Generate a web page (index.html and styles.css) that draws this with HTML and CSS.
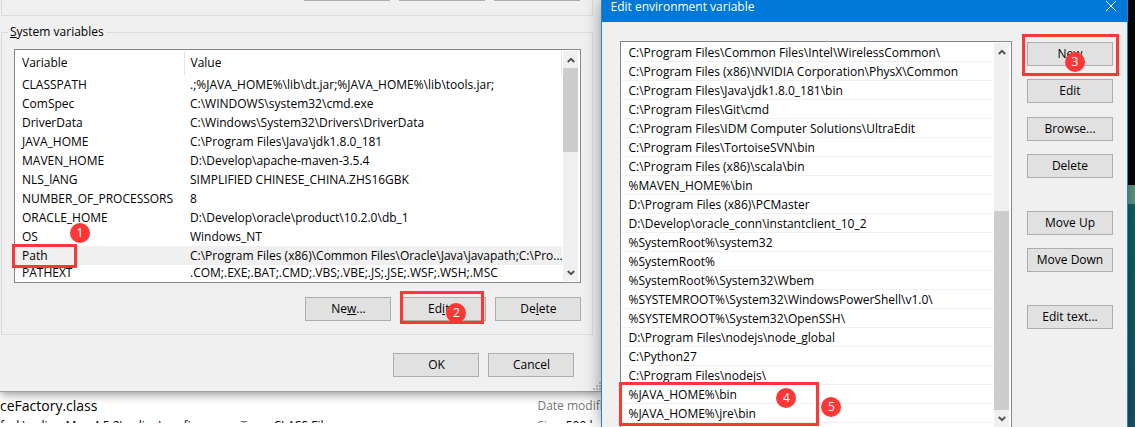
FILE: index.html
```html
<!DOCTYPE html>
<html lang="en">
<head>
<meta charset="utf-8">
<title>Environment Variables</title>
<link rel="stylesheet" href="styles.css">
</head>
<body>
<div class="desktop">
  <div class="background">
    <section class="dialog variables">
      <div class="user-group"><span></span><span></span><span></span></div>
      <fieldset class="system-group">
        <legend><u>S</u>ystem variables</legend>
        <div class="listbox variable-box">
          <table class="variable-table">
            <thead><tr><th class="name">Variable</th><th>Value</th></tr></thead>
            <tbody>
              <tr><td>CLASSPATH</td><td>.;%JAVA_HOME%\lib\dt.jar;%JAVA_HOME%\lib\tools.jar;</td></tr>
              <tr><td>ComSpec</td><td>C:\WINDOWS\system32\cmd.exe</td></tr>
              <tr><td>DriverData</td><td>C:\Windows\System32\Drivers\DriverData</td></tr>
              <tr><td>JAVA_HOME</td><td>C:\Program Files\Java\jdk1.8.0_181</td></tr>
              <tr><td>MAVEN_HOME</td><td>D:\Develop\apache-maven-3.5.4</td></tr>
              <tr><td>NLS_lANG</td><td>SIMPLIFIED CHINESE_CHINA.ZHS16GBK</td></tr>
              <tr><td>NUMBER_OF_PROCESSORS</td><td>8</td></tr>
              <tr><td>ORACLE_HOME</td><td>D:\Develop\oracle\product\10.2.0\db_1</td></tr>
              <tr><td>OS</td><td>Windows_NT</td></tr>
              <tr class="selected"><td class="anchor">Path<i class="frame frame-path"></i><b class="badge badge-1">1</b></td><td>C:\Program Files (x86)\Common Files\Oracle\Java\javapath;C:\Pro...</td></tr>
              <tr class="last"><td>PATHEXT</td><td>.COM;.EXE;.BAT;.CMD;.VBS;.VBE;.JS;.JSE;.WSF;.WSH;.MSC</td></tr>
            </tbody>
          </table>
          <div class="scrollbar">
            <button class="arrow" aria-label="Scroll up"><svg viewBox="0 0 8 6"><path d="M.8 5 4 1.800 7.200 5"/></svg></button>
            <div class="track"><div class="thumb thumb-top"></div></div>
            <button class="arrow" aria-label="Scroll down"><svg viewBox="0 0 8 6"><path d="M.8 1 4 4.200 7.200 1"/></svg></button>
          </div>
        </div>
        <div class="actions">
          <button class="btn">Ne<u>w</u>...</button>
          <div class="anchor"><button class="btn">Ed<u>i</u>t...</button><i class="frame frame-edit"></i><b class="badge badge-2">2</b></div>
          <button class="btn">De<u>l</u>ete</button>
        </div>
      </fieldset>
      <div class="actions confirm">
        <button class="btn">OK</button>
        <button class="btn">Cancel</button>
      </div>
      <svg class="grip" viewBox="0 0 8 8"><path d="M0 6h2v2H0zM3 6h2v2H3zM6 6h2v2H6zM3 3h2v2H3zM6 3h2v2H6zM6 0h2v2H6z"/></svg>
    </section>
    <section class="explorer">
      <div class="file-row"><span class="file-name">ceFactory.class</span><span class="meta">Date modified:</span></div>
      <div class="file-row detail"><span class="path">fork\online-Mav-4.5.2\online\configurm</span><span class="type"><em>Type:</em> CLASS File</span><span class="meta">Size: <strong>500 bytes</strong></span></div>
    </section>
  </div>
  <section class="dialog editor">
    <header class="titlebar">
      <h1>Edit environment variable</h1>
      <button class="close" aria-label="Close"><svg viewBox="0 0 12 12"><path d="M1 1l10 10M11 1 1 11"/></svg></button>
    </header>
    <div class="editor-body">
      <div class="listbox path-box">
        <ul class="paths">
          <li>C:\Program Files\Common Files\Intel\WirelessCommon\</li>
          <li>C:\Program Files (x86)\NVIDIA Corporation\PhysX\Common</li>
          <li>C:\Program Files\Java\jdk1.8.0_181\bin</li>
          <li>C:\Program Files\Git\cmd</li>
          <li>C:\Program Files\IDM Computer Solutions\UltraEdit</li>
          <li>C:\Program Files\TortoiseSVN\bin</li>
          <li>C:\Program Files (x86)\scala\bin</li>
          <li>%MAVEN_HOME%\bin</li>
          <li>D:\Program Files (x86)\PCMaster</li>
          <li>D:\Develop\oracle_conn\instantclient_10_2</li>
          <li>%SystemRoot%\system32</li>
          <li>%SystemRoot%</li>
          <li>%SystemRoot%\System32\Wbem</li>
          <li>%SYSTEMROOT%\System32\WindowsPowerShell\v1.0\</li>
          <li>%SYSTEMROOT%\System32\OpenSSH\</li>
          <li>D:\Program Files\nodejs\node_global</li>
          <li>C:\Python27</li>
          <li>C:\Program Files\nodejs\</li>
          <li class="anchor">%JAVA_HOME%\bin<i class="frame frame-java"></i><b class="badge badge-4">4</b><b class="badge badge-5">5</b></li>
          <li>%JAVA_HOME%\jre\bin</li>
        </ul>
        <div class="scrollbar">
          <button class="arrow" aria-label="Scroll up"><svg viewBox="0 0 8 6"><path d="M.8 5 4 1.800 7.200 5"/></svg></button>
          <div class="track"><div class="thumb thumb-bottom"></div></div>
          <button class="arrow" aria-label="Scroll down"><svg viewBox="0 0 8 6"><path d="M.8 1 4 4.200 7.200 1"/></svg></button>
        </div>
      </div>
      <div class="side">
        <div class="pair">
          <div class="anchor"><button class="btn">New</button><i class="frame frame-new"></i><b class="badge badge-3">3</b></div>
          <button class="btn">Edit</button>
        </div>
        <div class="pair">
          <button class="btn">Browse...</button>
          <button class="btn">Delete</button>
        </div>
        <div class="pair spaced">
          <button class="btn">Move Up</button>
          <button class="btn">Move Down</button>
        </div>
        <div class="pair spaced">
          <button class="btn">Edit text...</button>
        </div>
      </div>
    </div>
  </section>
  <div class="wallpaper"><div class="console"></div><div class="edge"></div></div>
</div>
</body>
</html>
```
FILE: styles.css
```css
* { box-sizing: border-box; }
body {
  margin: 0;
  font: 12px/16px "Open Sans", "Noto Sans", sans-serif;
  color: #000;
}
button { font: inherit; color: inherit; padding: 0; }
.desktop {
  display: flex;
  height: 100vh;
  overflow: hidden;
  background: #fff;
}
.background {
  flex: 602 1 0;
  min-width: 0;
  display: flex;
  flex-direction: column;
}
.dialog { background: #f0f0f0; }
.anchor { position: relative; }

/* Environment variables dialog */
.variables {
  position: relative;
  padding-bottom: 14px;
  border-bottom: 1px solid #9e9e9e;
  box-shadow: 0 2px 10px rgba(0, 0, 0, .45);
}
.user-group {
  display: flex;
  justify-content: flex-end;
  gap: 9px;
  height: 16px;
  margin: 0 8px 0 1px;
  padding-right: 12px;
  border: 1px solid #dcdcdc;
  border-top: 0;
}
.user-group span { width: 86px; height: 1px; background: #adadad; }
.system-group {
  min-width: 0;
  margin: 8px 8px 0 1px;
  padding: 9px 11px 13px 12px;
  border: 1px solid #dcdcdc;
}
.system-group legend { margin-left: -6px; padding: 0 2px; }
.listbox {
  display: flex;
  background: #fff;
  border: 1px solid #828790;
  padding: 1px;
}
.variable-table {
  flex: 1;
  width: 100%;
  min-width: 0;
  table-layout: fixed;
  border-collapse: collapse;
}
.variable-table th, .variable-table td {
  height: 19px;
  padding: 0 6px;
  text-align: left;
  font-weight: 400;
  white-space: nowrap;
}
.variable-table th { height: 24px; border-right: 1px solid #e5e5e5; }
.variable-table .name { width: 168px; }
.variable-table .selected { background: #f0f0f0; }
.variable-table .last td { height: 16px; }
.actions {
  display: flex;
  justify-content: flex-end;
  gap: 9px;
  margin-top: 14px;
}
.confirm { margin: 18px 27px 0 0; }
.btn {
  display: block;
  width: 86px;
  height: 24px;
  background: #e1e1e1;
  border: 1px solid #adadad;
}
.grip {
  position: absolute;
  right: 0;
  bottom: 1px;
  width: 8px;
  height: 8px;
  fill: #bfbfbf;
}

/* Scroll bars */
.scrollbar {
  flex: none;
  display: flex;
  flex-direction: column;
  width: 16px;
  margin-left: 1px;
  border-right: 1px solid #fff;
  background: #f0f0f0;
}
.arrow {
  display: grid;
  place-items: center;
  height: 17px;
  border: 0;
  background: none;
}
.arrow svg { width: 8px; height: 6px; fill: none; stroke: #555; stroke-width: 2; }
.track { flex: 1; display: flex; flex-direction: column; }
.thumb { background: #cdcdcd; }
.thumb-top { height: 43%; }
.thumb-bottom { height: 57%; margin-top: auto; }

/* File list under the dialogs */
.explorer { padding-top: 4px; }
.file-row { display: flex; height: 20px; line-height: 20px; white-space: nowrap; }
.file-name { flex: 1; font-size: 14px; }
.meta { width: 64px; overflow: hidden; color: #777; }
.meta strong { font-weight: 400; color: #000; }
.detail { height: 7px; overflow: hidden; }
.path { width: 40%; }
.type { flex: 1; }
.type em { font-style: normal; color: #777; }

/* Edit environment variable dialog */
.editor {
  flex: 525 1 0;
  min-width: 0;
  display: flex;
  flex-direction: column;
  position: relative;
  border: solid #2383cc;
  border-width: 0 1px;
  box-shadow: 0 0 16px rgba(0, 0, 0, .4);
}
.titlebar {
  display: flex;
  justify-content: space-between;
  height: 22px;
  padding: 0 10px 0 8px;
  background: #0078d7;
  color: #fff;
}
.titlebar h1 { margin: 0; font: inherit; line-height: 14px; }
.close { width: 12px; height: 12px; border: 0; background: none; }
.close svg { display: block; width: 12px; height: 12px; stroke: #fff; }
.editor-body {
  flex: 1;
  min-height: 0;
  display: flex;
  gap: 15px;
  padding: 19px 14px 0 18px;
}
.path-box { flex: 1; min-width: 0; border-bottom: 0; padding-bottom: 0; }
.paths { flex: 1; min-width: 0; margin: 0; padding: 0; list-style: none; }
.paths li {
  height: 19px;
  padding-left: 6px;
  line-height: 20px;
  border-bottom: 1px solid #f0f0f0;
  white-space: nowrap;
}
.side { display: flex; flex-direction: column; gap: 14px; padding-top: 1px; }
.pair { display: flex; flex-direction: column; gap: 13px; }
.spaced { margin-top: 19px; }

/* Strip of desktop beside the dialogs */
.wallpaper {
  flex: 7 1 0;
  display: flex;
  flex-direction: column;
  background: linear-gradient(#136d6b, #15605f 65%, #1c5264);
}
.console { height: 185px; background: #050505; }
.edge { height: 19px; background: #659a87; }

/* Numbered callouts */
.frame { position: absolute; border: 3px solid #fc3736; z-index: 1; }
.badge {
  position: absolute;
  z-index: 2;
  width: 20px;
  height: 20px;
  border-radius: 50%;
  background: #fc3736;
  color: #fff;
  font-weight: 400;
  line-height: 20px;
  text-align: center;
}
.frame-path { left: -4px; top: -2px; width: 65px; height: 24px; }
.badge-1 { left: 54px; top: -23px; }
.frame-edit { inset: -6px 2px -3px 0; }
.badge-2 { left: 46px; top: 6px; }
.frame-new { inset: -8px -6px -10px -5px; }
.badge-3 { left: 38px; top: 10px; }
.frame-java { left: -3px; top: -3px; width: 200px; height: 44px; }
.badge-4 { left: 154px; top: 3px; }
.badge-5 { left: 199px; top: 12px; }
```
